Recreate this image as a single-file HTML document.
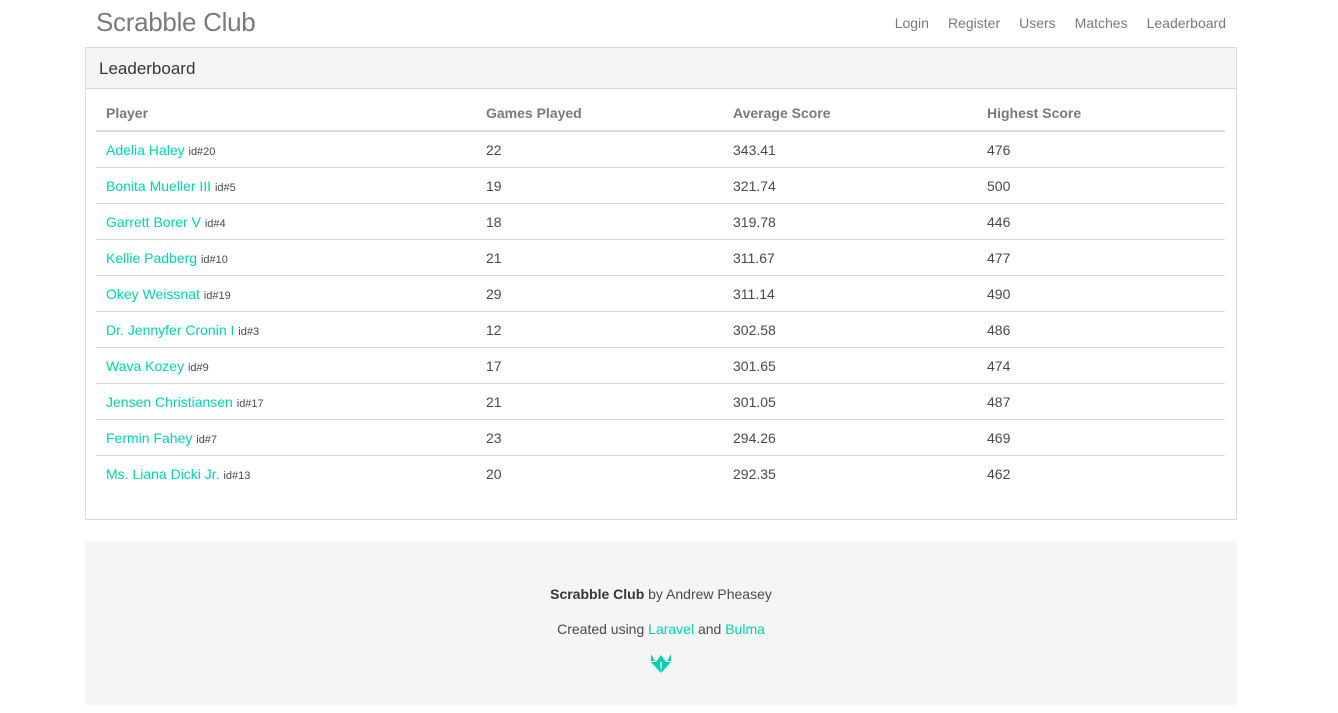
<!DOCTYPE html>
<html><head><meta charset="utf-8"><style>
body{margin:0;background:#fff;font-family:"Liberation Sans",sans-serif;color:#4a4a4a;font-size:14px}
.c{position:relative;width:1152px;margin-left:85px}
.title{position:absolute;left:11px;top:7px;font-size:26px;color:#7a7a7a;font-weight:300;letter-spacing:-0.3px}
.nav{position:absolute;right:11px;top:15px;font-size:14px;color:#7a7a7a}
.nav span{margin-left:19px}
.panel{position:absolute;top:47px;left:0;width:1150px;height:471px;border:1px solid #dbdbdb}
.ph{height:40px;background:#f5f5f5;border-bottom:1px solid #dbdbdb;font-size:17px;line-height:42px;padding-left:13px;color:#363636}
table{position:absolute;left:10px;top:48px;width:1129px;border-collapse:collapse}
th{text-align:left;font-weight:bold;color:#7a7a7a;height:34px;border-bottom:2px solid #dbdbdb;padding:0 0 0 10px;font-size:14px}
td{height:35px;border-bottom:1px solid #dbdbdb;padding:0 0 0 10px;font-size:14px}
tr:last-child td{border-bottom:none}
a{color:#00d1b2;text-decoration:none}
small{font-size:11px;color:#4a4a4a}
.f{position:absolute;top:541px;left:0;width:1152px;height:164px;background:#f5f5f5;text-align:center;font-size:14px}
</style></head><body><div class="c">
<div class="title">Scrabble Club</div>
<div class="nav"><span>Login</span><span>Register</span><span>Users</span><span>Matches</span><span>Leaderboard</span></div>
<div class="panel"><div class="ph">Leaderboard</div>
<table>
<tr><th style="width:370px">Player</th><th style="width:237px">Games Played</th><th style="width:244px">Average Score</th><th>Highest Score</th></tr>
<tr><td><a>Adelia Haley</a> <small>id#20</small></td><td>22</td><td>343.41</td><td>476</td></tr>
<tr><td><a>Bonita Mueller III</a> <small>id#5</small></td><td>19</td><td>321.74</td><td>500</td></tr>
<tr><td><a>Garrett Borer V</a> <small>id#4</small></td><td>18</td><td>319.78</td><td>446</td></tr>
<tr><td><a>Kellie Padberg</a> <small>id#10</small></td><td>21</td><td>311.67</td><td>477</td></tr>
<tr><td><a>Okey Weissnat</a> <small>id#19</small></td><td>29</td><td>311.14</td><td>490</td></tr>
<tr><td><a>Dr. Jennyfer Cronin I</a> <small>id#3</small></td><td>12</td><td>302.58</td><td>486</td></tr>
<tr><td><a>Wava Kozey</a> <small>id#9</small></td><td>17</td><td>301.65</td><td>474</td></tr>
<tr><td><a>Jensen Christiansen</a> <small>id#17</small></td><td>21</td><td>301.05</td><td>487</td></tr>
<tr><td><a>Fermin Fahey</a> <small>id#7</small></td><td>23</td><td>294.26</td><td>469</td></tr>
<tr><td><a>Ms. Liana Dicki Jr.</a> <small>id#13</small></td><td>20</td><td>292.35</td><td>462</td></tr>
</table></div>
<div class="f">
<div style="position:absolute;top:45px;width:100%"><b style="color:#363636">Scrabble Club</b> by Andrew Pheasey</div>
<div style="position:absolute;top:80px;width:100%">Created using <a>Laravel</a> and <a>Bulma</a></div>
<svg style="position:absolute;left:565px;top:113px" width="22" height="20" viewBox="0 0 22 20"><path fill="#00d1b2" d="M1 0L5 7H1ZM21 0L17 7H21ZM1 8H10L11 19ZM12 8H21L11 19ZM6 8L11 1L16 8Z"/></svg>
</div>
</div></body></html>
